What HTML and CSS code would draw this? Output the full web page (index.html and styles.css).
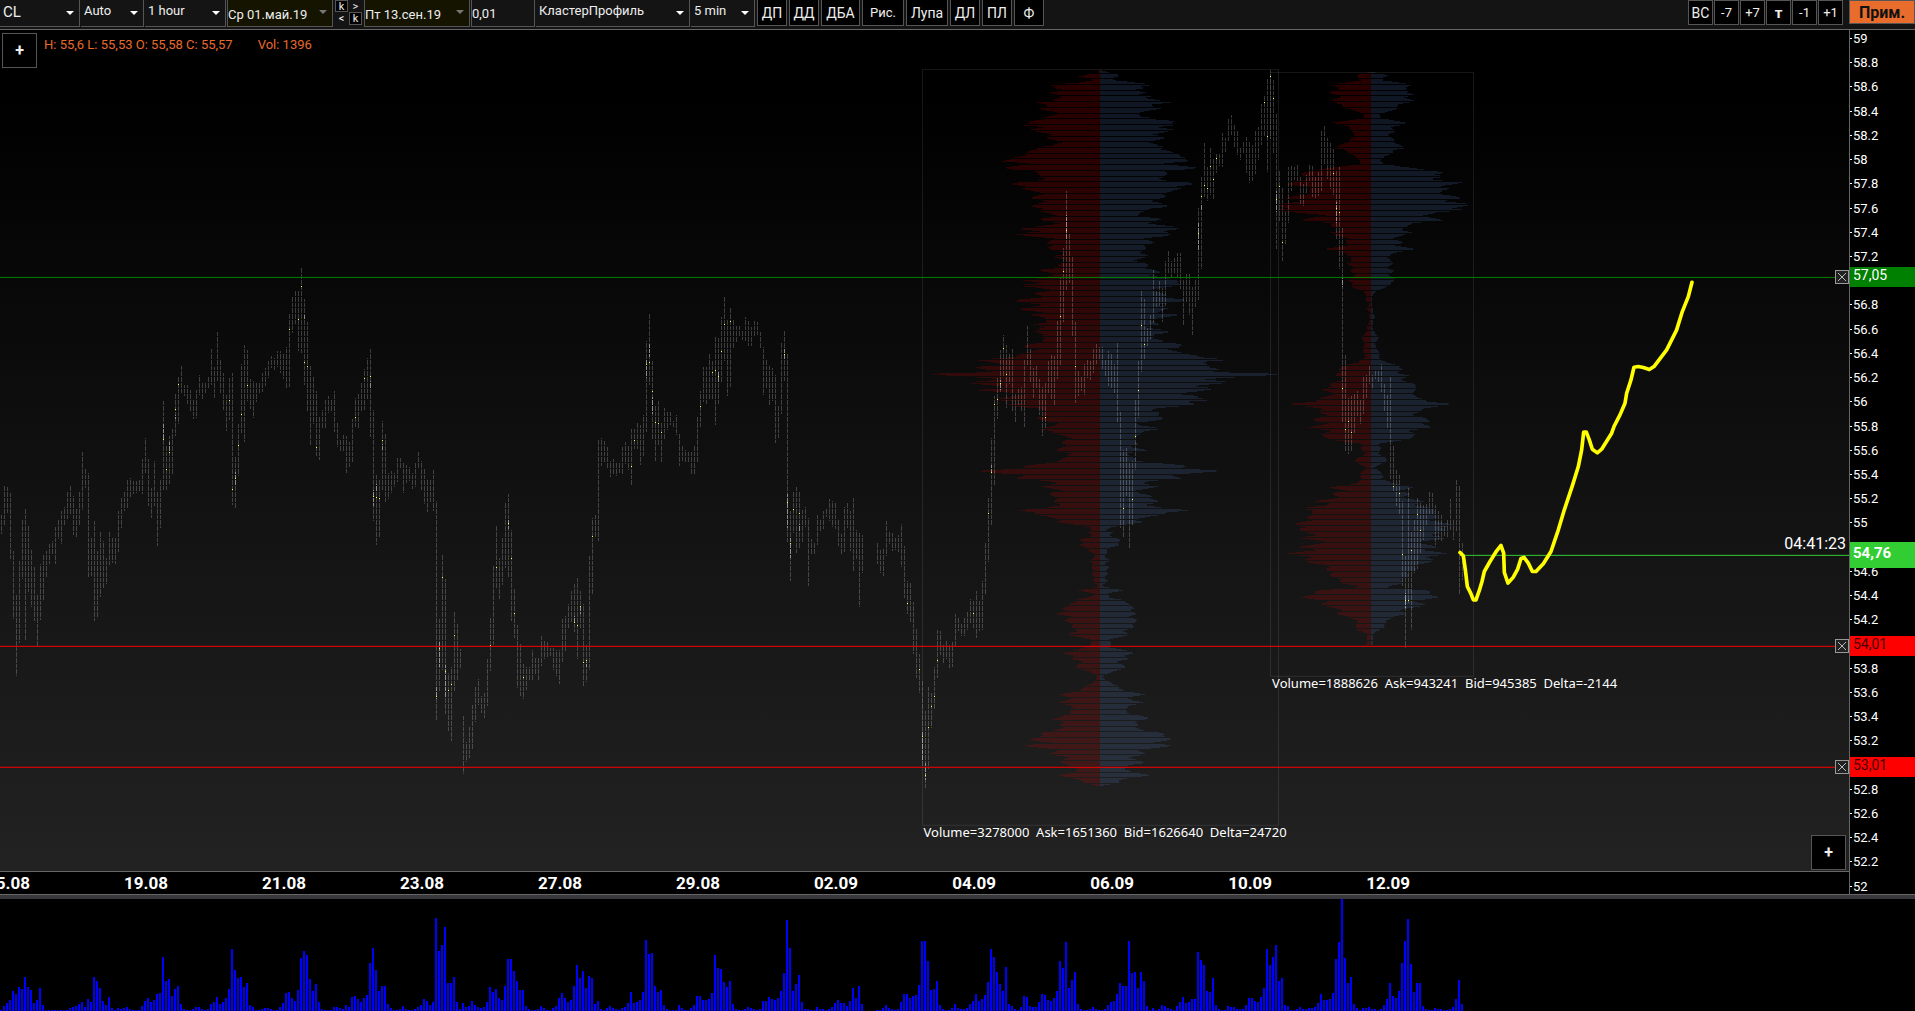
FILE: index.html
```html
<!DOCTYPE html>
<html lang="ru">
<head>
  <meta charset="UTF-8" />
  <meta name="viewport" content="width=device-width, initial-scale=1" />
  <title>CL - КластерПрофиль</title>
  <link rel="stylesheet" href="styles.css">
</head>
<body>
  <header class="toolbar">
    <label class="drop w-symbol"><select aria-label="Инструмент"><option>CL</option></select></label>
    <label class="drop w-auto"><select aria-label="Масштаб"><option>Auto</option></select></label>
    <label class="drop w-period"><select aria-label="Период"><option>1 hour</option></select></label>
    <label class="drop date"><select aria-label="Дата с"><option>Ср 01.май.19</option></select></label>
    <div class="steps">
      <button class="key">k</button><button>&gt;</button>
      <button>&lt;</button><button class="key">k</button>
    </div>
    <label class="drop date"><select aria-label="Дата по"><option>Пт 13.сен.19</option></select></label>
    <input class="step" type="text" value="0,01" aria-label="Шаг цены">
    <label class="drop w-mode"><select aria-label="Режим"><option>КластерПрофиль</option></select></label>
    <label class="drop w-min"><select aria-label="Интервал"><option>5 min</option></select></label>
    <div class="tools">
      <button>ДП</button>
      <button>ДД</button>
      <button class="mid">ДБА</button>
      <button class="wide small">Рис.</button>
      <button class="wide">Лупа</button>
      <button>ДЛ</button>
      <button>ПЛ</button>
      <button>Ф</button>
    </div>
    <div class="shifts">
      <button class="big">ВС</button>
      <button>-7</button>
      <button>+7</button>
      <button class="bold">т</button>
      <button>-1</button>
      <button>+1</button>
    </div>
    <button class="apply">Прим.</button>
  </header>

  <main class="chart">
    <section class="plot">
      <svg id="plot" viewBox="0 0 1849 841" preserveAspectRatio="none" aria-hidden="true">
        <g class="profiles" id="profiles"></g>
        <rect class="range" x="922.5" y="39.5" width="356" height="756" />
        <rect class="range" x="1270.5" y="42.5" width="203" height="604" />
        <g id="candles"></g>
        <path class="level up" d="M0 247.5H1849" />
        <path class="level last" d="M1460 525.5H1849" />
        <path class="level down" d="M0 616.5H1849M0 737.5H1849" />
        <path class="forecast" transform="translate(1450 240) scale(0.3333)" d="M30 848L40 858L46 900L52 950L62 970L70 990H78L88 962L96 935L103 905L120 875L140 843L153 827L161 850L163 908L174 940L190 922L203 898L213 866L222 863L235 880L247 905H258L280 882L303 845L325 780L343 720L368 645L385 590L395 540L401 487H409L418 510L427 538L442 549L455 538L485 490L492 470L510 435L525 400L530 370L543 330L552 292L565 290L580 293L598 299L612 290L650 240L665 210L680 180L697 125L715 80L726 37" />
      </svg>
      <p class="ohlc"><span>H: 55,6 L: 55,53 O: 55,58 C: 55,57</span><span>Vol: 1396</span></p>
      <button class="plus plus-top">+</button>
      <button class="plus plus-bottom">+</button>
      <button class="close" style="top: 29.4%" aria-label="Удалить уровень 57,05"><svg viewBox="0 0 12 12"><path d="M2 2L10 10M10 2L2 10" /></svg></button>
      <button class="close" style="top: 73.3%" aria-label="Удалить уровень 54,01"><svg viewBox="0 0 12 12"><path d="M2 2L10 10M10 2L2 10" /></svg></button>
      <button class="close" style="top: 87.7%" aria-label="Удалить уровень 53,01"><svg viewBox="0 0 12 12"><path d="M2 2L10 10M10 2L2 10" /></svg></button>
      <span class="timer" style="top: 61%">04:41:23</span>
      <span class="note" style="left: 49.95%; top: 95.4%">Volume=3278000&nbsp; Ask=1651360&nbsp; Bid=1626640&nbsp; Delta=24720</span>
      <span class="note" style="left: 68.8%; top: 77.7%">Volume=1888626&nbsp; Ask=943241&nbsp; Bid=945385&nbsp; Delta=-2144</span>
    </section>

    <aside class="prices">
      <ol id="prices"></ol>
      <span class="tag up" style="top: 28.6%">57,05</span>
      <span class="tag last" style="top: 60.7%">54,76</span>
      <span class="tag down" style="top: 71.2%">54,01</span>
      <span class="tag down" style="top: 85.2%">53,01</span>
    </aside>

    <ol class="days">
      <li>15.08</li>
      <li>19.08</li>
      <li>21.08</li>
      <li>23.08</li>
      <li>27.08</li>
      <li>29.08</li>
      <li>02.09</li>
      <li>04.09</li>
      <li>06.09</li>
      <li>10.09</li>
      <li>12.09</li>
    </ol>
  </main>

  <section class="volume">
    <svg id="volume" viewBox="0 0 1915 112" preserveAspectRatio="none" aria-hidden="true"></svg>
  </section>

  <script src="chart.js"></script>
</body>
</html>
```
FILE: styles.css
```css
* { box-sizing: border-box; margin: 0; padding: 0; }

body {
  display: flex;
  flex-direction: column;
  height: 100vh;
  overflow: hidden;
  background: #000;
  color: #fff;
  font-family: Roboto, "Noto Sans", sans-serif;
  font-size: 13px;
}

button, select, input {
  font-family: inherit;
  font-size: inherit;
  color: #eee;
  background: #000;
  border: 1px solid #555;
  border-radius: 0;
}

ol { list-style: none; }

/* toolbar */
.toolbar {
  display: flex;
  align-items: flex-start;
  gap: 1px;
  flex: none;
  height: 30px;
  background: #141414;
  border-bottom: 1px solid #666;
}

.drop {
  position: relative;
  flex: none;
  height: 27px;
}

.drop select {
  appearance: none;
  display: block;
  width: 100%;
  height: 27px;
  padding: 0 3px 6px;
  background: #141414;
  border-width: 0 1px 1px 0;
}

.drop::after {
  content: "";
  position: absolute;
  right: 6px;
  top: 11px;
  border: 4px solid transparent;
  border-top-color: #fff;
  border-bottom: 0;
  pointer-events: none;
}

.w-symbol { width: 80px; }
.w-auto { width: 63px; }
.w-period { width: 81px; }
.w-mode { width: 154px; }
.w-min { width: 64px; }

.w-symbol select { font-size: 15px; padding-bottom: 3px; }

.date { width: 106px; }
.date select {
  padding: 2px 0 0;
  background: #141400;
  border-left-width: 1px;
}
.date::after { border-top-color: #777; top: 10px; }

.steps {
  display: grid;
  grid-template-columns: 13px 13px;
  grid-template-rows: 12px 13px;
  gap: 0 1px;
  width: 29px;
  padding-left: 1px;
}
.steps button {
  background: none;
  border-color: transparent;
  font-size: 11px;
  line-height: 9px;
}
.steps .key { background: #000; border-color: #555; }

.step {
  width: 64px;
  height: 27px;
  background: #141414;
  border-width: 0 1px 1px;
}

.tools, .shifts { display: flex; }
.tools { gap: 2px; margin-left: 1px; }
.tools button {
  width: 30px;
  height: 26px;
  border-top: 0;
  font-size: 14px;
}
.tools .mid { width: 39px; }
.tools .wide { width: 42px; }
.tools .small { font-size: 13px; }

.shifts { gap: 1px; margin: 0 5px 0 auto; }
.shifts button { width: 25px; height: 25px; font-size: 13px; }
.shifts .big { font-size: 14px; }
.shifts .bold { font-weight: bold; font-size: 15px; }

.apply {
  width: 66px;
  height: 24px;
  background: #e86c2c;
  color: #111;
  font-size: 16px;
  font-weight: bold;
}

/* chart */
.chart {
  flex: 1;
  min-height: 0;
  display: grid;
  grid-template-columns: 1fr 66px;
  grid-template-rows: 1fr 24px;
}

.plot {
  position: relative;
  overflow: hidden;
  background: linear-gradient(#000, #000 8%, #222);
}
.plot > svg {
  display: block;
  position: absolute;
  width: 100%;
  height: 100%;
  shape-rendering: crispEdges;
}

.bid { fill: rgba(255, 0, 0, .16); }
.ask { fill: rgba(100, 155, 240, .15); }
.range { fill: none; stroke: rgba(255, 255, 255, .09); }
.candle { fill: rgba(255, 255, 255, .21); }
.strong { fill: rgba(255, 255, 255, .4); }
.poc { fill: #ffff40; }
.level { stroke-width: 1; }
.level.up { stroke: #008000; }
.level.last { stroke: #32cd32; }
.level.down { stroke: #f00; }
.forecast {
  fill: none;
  stroke: #ff0;
  stroke-width: 11;
  stroke-linecap: round;
  stroke-linejoin: round;
  shape-rendering: auto;
}

.ohlc {
  position: absolute;
  left: 44px;
  top: 7px;
  display: flex;
  gap: 25px;
  color: #e8692c;
}

.plus {
  position: absolute;
  width: 35px;
  height: 35px;
  font-size: 16px;
  font-weight: bold;
}
.plus-top { left: 2px; top: 3px; }
.plus-bottom { right: 3px; bottom: 1px; }

.close {
  position: absolute;
  right: 0;
  width: 14px;
  height: 14px;
  background: #222;
  border-color: #999;
  transform: translateY(-50%);
}
.close svg { display: block; width: 12px; height: 12px; }
.close path { stroke: #bbb; }

.timer, .note {
  position: absolute;
  white-space: nowrap;
  transform: translateY(-50%);
}
.timer { right: 3px; font-size: 16px; }
.note { font-family: "Noto Sans", sans-serif; }

/* scales */
.prices {
  position: relative;
  grid-row: span 2;
  border-left: 1px solid #666;
}
.prices ol {
  display: flex;
  flex-direction: column;
  justify-content: space-between;
  height: 100%;
}
.prices li {
  display: flex;
  align-items: center;
  gap: 1px;
  height: 17px;
  line-height: 17px;
}
.prices li::before {
  content: "";
  width: 2px;
  height: 1px;
  background: #fff;
}

.tag {
  position: absolute;
  left: 0;
  right: 0;
  padding-left: 3px;
  font-size: 14px;
  line-height: 16px;
  padding-bottom: 4px;
  transform: translateY(-50%);
}
.tag.up { background: #008000; }
.tag.last {
  background: #32cd32;
  font-size: 15px;
  font-weight: bold;
  line-height: 22px;
}
.tag.down { background: #f00; color: #400; }

.days {
  display: flex;
  overflow: hidden;
  border-top: 1px solid #666;
  font-size: 17px;
  font-weight: bold;
  line-height: 22px;
}
.days li {
  flex: none;
  width: 7.465%;
  text-align: center;
}
.days li:first-child { margin-left: -3.3%; }

/* volume */
.volume {
  flex: none;
  height: 11.5vh;
  border-top: 4px solid #38383c;
  box-shadow: inset 0 1px #000, 0 -1px #666;
}
.volume svg {
  display: block;
  width: 100%;
  height: 100%;
  fill: #00f;
  shape-rendering: crispEdges;
}
```
FILE: chart.js
```js
// hourly bars: top-bottom, @ price of max volume, ~ heavy volume zone
const hours = [
  { first: 0, top: 220, scale: 2.904, bars: `
    768-825 685-800 688-765 705-897 873-1071 998-1237 903-1141 780-955 752-1135 800-993
    870-1036 920-1077 998-1151 911-1074 885-1016 873-950 853-911 844-885 803-911 783-838
    757-853 745-798 699-783 682-771 713-829 751-835 702-800 583-754 635-690 647-949
    832-946 786-1077 873-1065 818-1007 844-981 893-969 818-914 832-908 835-911 757-876
    716-806 702-757 667-748 661-719 670-710 670-705 664-699 606-708 545-647 606-742
    690-777 612-742 699-861 667-806 438-696@550~505-550 565-696@636 540-679@588~558-590 519-652 415-540@463~480-490 368-505@392
    336-418 391-423 391-446 406-469 435-490 406-487 362-420 382-435 385-418 365-400
    287-391 339-429 237-380 318-418 356-464 420-525 371-493@436 356-740@695 597-748@663~645-682 504-655@567
    330-530@477 275-557 290-438@393 374-461 379-487 382-440 382-417 356-411 342-394 321-371
    307-342 313-350 292-339 292-356 298-374 281-403 185-397@230 136-240 115-214 118-292@201
    51-301@107 141-391@326~190-200 208-467@338 333-569 368-504 409-598@573 484-609 464-519 435-516 423-472
    432-467 409-528 501-571 548-586 536-583 539-647 557-629 490-620 429-513@486 415-516
    385-467 347-464@373 313-437 287-542@367~380-400 464-786@715~697-742 650-856@718~680-700 664-835@721 496-697@553~562-580 530-731 647-722
    641-705 647-688 603-673 603-635 615-705 623-676 629-670 647-693 618-687 588-635
    612-696 632-737 664-760 667-731 638-757 728-1368@1296~1266-1305 1071-1283@1157~1138-1211 885-1220@950 954-1350@1223~1205-1300 1228-1397@1278
    1211-1426@1261 1051-1281@1119 1086-1251 1160-1217 1353-1522 1428-1486 1384-1475 1321-1451 1265-1370 1246-1321
    1295-1344 1286-1358 1188-1324 1066-1222@1148 914-1147 800-984@921 893-1013 836-972 731-923 710-949@795~785-810
    812-1077@895 984-1127@1055 1089-1272 1144-1295 1202-1304@1241 1211-1278 1211-1249 1163-1249 1185-1234 1185-1251
    1121-1208 1132-1188 1138-1185 1156-1179 1156-1220 1161-1237 1161-1260 1071-1196 1062-1167 1028-1098
    990-1080 969-1109@1081~1063-1085 952-1188@1091 990-1100@1035~1030-1057 1028-1266@1197 1147-1254@1192~1195-1210 888-1220 777-998@831 768-835 548-844
    545-627 554-618 571-632 612-658 606-650 620-655 618-647 571-652 557-621 568-638
    516-685@628 519-577@553 501-577 507-623 478-600 263-528@332~320-372 185-391@326~273-312 321-551@410~427-475 449-612@500 438-569@503
    499-618@529 458-548 469-522 469-508 496-514 478-536 530-627 565-612 580-618 588-615
    588-652 568-652 481-615 409-514@454 339-440 339-446 298-432 321-435@355 249-507@349 255-446@367~355-385
    196-385@294 136-321@216 202-424 168-397@207 203-284 220-266 220-249 234-260 196-263 205-278
    223-278 205-252 208-246 237-287 281-420 319-403 333-452 342-438 362-560 449-545
    269-475 231-379@303~285-317 301-847@733~710-807 757-960@852~836-893 702-823@753 687-879 702-864@766~795-815 754-850 745-803 777-975
    838-885 850-882 768-856 783-818 757-809 748-774 722-786 728-803 734-809 780-861
    824-882 745-876 734-806 757-873 716-931 812-896 821-1036 829-937 0-0 0-0
    0-0 0-0 847-911 870-937 864-946 786-888 818-853 821-873 832-870 829-876
    795-920 861-1010 960-1056@1026 963-1080 1022-1173 1100-1243 1173-1286@1218 1251-1498@1412~1400-1485 1339-1562@1525~1490-1540 1269-1507@1386
    1286-1388@1325 1211-1333@1296 1103-1243@1192` },
  { first: 313, top: 30, scale: 3, bars: `
    1713-1785 1755-1810 1743-1798 1755-1824 1746-1822 1661-1760 1670-1712
    1688-1728 1670-1728 1655-1710 1616-1688 1620-1707@1660 1592-1733 1619-1713 1562-1710 1448-1602 1310-1506@1360
    1133-1398@1237~1215-1240 1008-1275@1033 954-1077@1019 870-996@970~960-990 825-948@865 855-1044@943 882-972 864-1053 1002-1085 984-1035
    981-1053 897-1101 798-915 864-966 924-1014 915-987 957-1065 981-1128 969-1104@1072 903-1002
    885-1020 888-1035 783-957 654-915@769 564-786@634 393-690@511~465-540 522-669 591-831 786-1029@919 933-1008
    951-993 912-1005 900-954 903-960 864-939 852-912 861-897 861-928 900-948 873-978
    882-984 912-1002 846-1089 1056-1404 1170-1434@1345 1164-1308 1209-1464 1203-1398@1318 1020-1230@1129 903-1074@991
    690-936@796 717-897@853 804-858 765-837 630-789 690-744 663-738 684-786 603-738 570-642
    603-654 594-642 579-654 579-687 660-798 639-726 642-765 681-825 657-744 444-720@520~490-570
    351-627@409~433-453 249-411@376 321-423@385 264-405@319 294-417@358 279-339@295 282-318 219-321 234-276 177-246
    165-225 192-261 213-285 261-300 243-282 228-339 243-369 255-363 213-342 201-300
    132-255 105-231@127 57-336@230 30-237@49 60-279@115 159-567@418~393-456 330-486@379 381-603@547 456-555 321-489
    318-393 321-360 315-366 348-432 372-438 345-399 312-366 318-411 348-414 336-408
    213-393 198-312 234-357 249-387 267-405@340 330-540@445~426-490 321-627@457 504-1089@985~650-680 885-1173@1108 1014-1182@1084
    1008-1176@1117 999-1119 993-1071 1017-1092 951-1062 945-1014 915-972 945-984 930-957 933-966
    912-996 972-1056 1005-1107 948-1257 1158-1293@1279 1230-1338 1241-1362@1300 1323-1578@1483 1488-1764@1621~1600-1645 1284-1630@1621
    1413-1710@1471 1380-1540 1314-1527@1363 1326-1480@1411 1335-1440 1332-1395 1293-1365 1299-1365 1335-1455 1353-1440
    1365-1443 1395-1428 1377-1434 1317-1410 1377-1440 1260-1413 1275-1605 1446-1560` },
];

// volume profiles: y, bid, ask
const profiles = [
  { x: 1100, rows: `
    30,5,5 36,5,22 42,34,50 48,54,46 54,20,20 60,20,40 66,60,100 72,122,132 78,105,95 84,112,110 90,95,90 96,120,108
    102,100,92 108,105,134 114,110,122 120,110,140 125,155,175 132,150,145 138,130,130 144,140,140 150,135,125 156,118,110
    162,105,92 168,120,95 174,150,140 181,175,186 187,162,165 195,190,183 201,155,160 207,165,172 213,150,160 222,135,148
    232,125,150 240,110,140 246,100,130 255,110,135 262,168,165 270,175,170 278,168,168 285,190,205 289,237,234 295,200,200
    303,232,205 308,190,170 314,200,190 322,220,228 330,205,195 338,150,165 345,140,150 352,150,160 360,155,165 366,190,205
    373,220,230 381,200,205 390,160,170 400,150,170 408,155,155 415,160,140 424,145,145 432,150,150 440,168,165 450,150,110
    458,120,90 468,115,110 475,140,145 482,130,130 490,110,135 498,150,170 508,205,196 513,160,170 520,200,165 528,165,155
    536,115,110 545,120,125 554,135,125 562,125,110 570,105,100 580,90,115 588,115,112 596,95,95 604,85,100 612,95,110
    622,110,122 628,150,130 636,120,140 645,130,140 653,140,160 660,185,185 667,160,220 675,200,185 681,150,150 690,125,135
    698,155,145 706,140,160 717,195,205 725,190,180 732,160,160 740,170,165 748,190,150 755,160,160 763,165,190 770,130,150
    778,150,140 786,125,130 794,165,140 802,155,130 810,150,155 818,150,165 826,155,140 834,125,120 842,150,165 850,165,195
    858,180,185 864,180,200 872,170,185 880,175,195 888,230,270 898,292,306 904,260,240 912,270,300 920,290,250 928,270,290
    935,310,325 940,418,437 948,320,350 957,270,290 966,310,305 974,280,250 982,260,290 990,280,240 998,210,210 1006,205,240
    1012,225,220 1019,268,287 1026,190,230 1034,225,215 1042,180,160 1050,140,130 1060,130,140 1069,170,165 1078,135,140
    1085,120,105 1095,110,100 1101,125,130 1108,145,145 1116,120,105 1125,85,85 1134,80,95 1144,90,80 1152,85,95 1160,95,80
    1170,100,110 1180,80,70 1190,75,75 1200,110,100 1208,120,140 1216,180,205 1224,215,230 1231,290,288 1238,240,220
    1246,210,200 1254,195,190 1262,125,120 1270,120,120 1278,135,135 1288,105,105 1298,115,90 1308,115,130 1316,110,135
    1324,105,135 1332,105,125 1342,130,150 1350,195,210 1360,170,170 1368,120,115 1376,105,90 1384,110,110 1392,60,60
    1400,30,35 1408,20,12 1416,28,30 1424,22,25 1432,30,35 1438,52,50 1446,40,48 1454,50,46 1462,30,22 1470,32,18 1480,12,15
    1490,15,12 1500,25,25 1508,18,12 1520,20,22 1530,15,15 1540,20,20 1550,12,10 1560,18,20 1570,10,10 1576,4,4 1584,25,35
    1590,50,54 1598,18,20 1606,18,24 1612,30,20 1620,65,70 1630,72,68 1638,75,75 1645,106,92 1652,80,75 1661,105,86
    1670,75,80 1680,80,85 1690,75,88 1700,65,78 1710,60,65 1722,80,70 1730,50,50 1738,25,22 1746,20,25 1754,25,28 1760,40,20
    1768,50,55 1779,103,93 1786,60,55 1796,70,70 1804,45,45 1812,50,50 1824,65,70 1832,25,32 1840,15,18 1850,6,4 1860,12,15
    1868,22,32 1876,35,42 1884,40,45 1892,60,72 1902,92,105 1910,80,75 1920,80,80 1928,100,105 1936,80,80 1946,55,55
    1954,80,70 1962,80,85 1972,95,115 1978,130,118 1986,85,85 1994,95,90 2002,100,100 2010,110,105 2018,140,150 2024,160,180
    2030,150,160 2038,165,165 2046,140,150 2056,180,165 2064,130,125 2072,110,100 2082,118,105 2090,85,80 2100,90,90
    2108,92,110 2116,80,70 2126,50,55 2134,65,85 2144,98,120 2152,75,75 2160,50,50 2168,35,42 2176,5,5` },
  { x: 1371, rows: `
    37,10,10 44,40,50 52,30,25 60,25,30 66,70,80 72,100,100 80,75,80 88,90,100 96,100,85 104,80,105 112,85,90 122,95,103
    130,85,80 138,70,65 146,50,60 154,35,45 162,18,22 170,15,20 178,50,55 186,88,80 194,70,75 202,55,50 210,45,58 220,45,50
    230,40,45 240,55,60 248,65,60 256,75,70 263,95,92 270,60,55 280,50,48 290,40,35 300,25,20 310,30,35 318,70,70
    326,120,120 334,180,200 342,160,150 350,155,175 358,180,165 366,180,210 374,210,195 382,150,195 390,140,165 398,160,180
    406,180,195 414,200,210 422,190,200 430,210,230 440,220,220 448,247,239 456,175,150 464,120,140 472,145,150 480,160,165
    488,110,120 496,95,85 506,70,75 515,100,105 522,85,78 530,70,65 538,60,60 546,55,75 554,60,65 565,108,102 574,80,75
    582,60,50 590,45,35 600,55,55 610,55,50 620,45,40 630,50,55 640,40,45 652,50,55 660,55,55 668,50,55 676,45,40 684,40,30
    692,20,15 700,12,6 710,14,4 720,12,3 730,4,2 745,12,5 755,4,4 770,6,10 780,4,5 790,6,4 800,12,4 810,6,5 820,15,12
    830,20,18 840,20,15 850,15,10 860,18,12 870,20,18 880,15,20 890,15,22 900,25,25 906,30,40 914,75,75 922,70,65 930,80,85
    938,85,65 946,80,90 954,70,85 962,80,80 970,95,100 978,110,125 986,118,105 994,100,100 1002,100,115 1010,110,105
    1018,130,135 1030,193,190 1038,155,160 1046,130,140 1054,125,110 1062,110,100 1070,130,135 1078,135,130 1086,120,145
    1094,125,140 1102,145,135 1110,110,105 1118,115,105 1126,110,100 1134,120,110 1142,70,60 1150,20,15 1160,25,25
    1170,20,20 1180,15,20 1190,25,30 1200,45,45 1210,30,25 1220,10,8 1228,15,15 1238,25,25 1248,28,35 1256,20,20 1264,30,50
    1274,60,75 1282,100,100 1290,70,80 1300,90,90 1310,80,80 1322,130,125 1330,100,110 1342,160,140 1350,140,150
    1357,165,180 1364,140,150 1374,155,155 1386,170,170 1396,180,200 1404,185,190 1414,155,160 1422,150,165 1432,170,180
    1442,120,130 1450,130,130 1460,170,155 1470,150,145 1480,200,180 1488,165,155 1500,155,145 1510,145,135 1520,95,100
    1530,110,110 1540,100,90 1550,90,85 1560,80,80 1570,65,70 1576,30,50 1582,50,45 1590,120,130 1600,150,155 1610,165,160
    1620,120,115 1630,120,130 1640,100,110 1650,75,75 1662,80,80 1670,60,60 1680,30,35 1690,38,38 1700,35,30 1710,35,20
    1720,8,5 1735,12,5 1745,8,5 1752,12,5` },
];

const volume = [
  1, 5, 8, 11, 20, 17, 24, 22, 34, 24, 21, 8, 11, 23, 6, 1, 1, 1, 1, 1, 1, 1, 1, 3, 4, 5, 7, 9, 4, 12, 9,
  34, 30, 23, 10, 6, 14, 3, 1, 3, 2, 3, 4, 2, 1, 1, 1, 5, 10, 13, 9, 11, 17, 18, 54, 30, 32, 15, 22, 25, 7,
  2, 1, 1, 2, 4, 4, 2, 1, 2, 7, 9, 14, 7, 9, 13, 22, 62, 41, 33, 34, 24, 28, 6, 4, 1, 1, 2, 3, 3, 2, 1, 1,
  4, 8, 18, 19, 13, 10, 21, 53, 60, 56, 32, 20, 27, 9, 2, 1, 1, 1, 4, 4, 3, 2, 6, 4, 14, 15, 12, 9,
  13, 16, 48, 63, 41, 20, 25, 25, 7, 3, 1, 1, 2, 5, 2, 1, 1, 2, 4, 6, 12, 10, 6, 9, 93, 60, 66, 84, 28, 28, 34, 9,
  2, 8, 4, 5, 10, 6, 4, 3, 4, 9, 24, 19, 22, 13, 11, 25, 52, 52, 40, 30, 21, 21, 5, 2, 1, 1, 2, 5, 3, 1, 1, 3,
  5, 13, 18, 13, 9, 11, 25, 46, 33, 40, 23, 35, 33, 7, 10, 2, 1, 3, 5, 3, 2, 1, 3, 4, 8, 19, 8, 9, 11, 19,
  71, 57, 58, 25, 19, 21, 6, 2, 1, 1, 1, 6, 3, 1, 1, 3, 6, 15, 15, 11, 11, 12, 18, 56, 43, 42, 29, 24, 30, 7, 2, 1,
  1, 2, 4, 3, 2, 1, 2, 10, 10, 14, 12, 11, 13, 20, 38, 91, 63, 20, 27, 36, 9, 2, 2, 1, 1, 4, 2, 2, 1, 2, 4, 8, 11, 8, 8, 5, 10,
  23, 13, 25, 7, 0, 0, 0, 0, 1, 1, 3, 6, 3, 2, 1, 2, 9, 17, 17, 13, 15, 16, 26, 70, 70, 50, 21, 22, 30, 6, 2,
  1, 1, 3, 7, 3, 2, 2, 3, 7, 10, 17, 10, 12, 16, 29, 62, 54, 39, 27, 20, 44, 7, 5, 2, 1, 4, 15, 14, 5, 4, 4,
  9, 17, 16, 11, 10, 13, 20, 50, 43, 69, 23, 31, 39, 7, 2, 1, 1, 2, 4, 2, 1, 1, 2, 6, 9, 10, 17, 28, 25, 25,
  70, 38, 39, 23, 39, 30, 5, 1, 3, 1, 2, 6, 5, 3, 2, 1, 5, 9, 14, 8, 9, 12, 12, 59, 51, 46, 20, 19, 33, 6, 2,
  1, 1, 5, 4, 4, 2, 2, 2, 6, 13, 13, 10, 9, 14, 23, 62, 46, 54, 66, 30, 33, 6, 5, 1, 1, 2, 4, 2, 2, 3, 3, 4,
  8, 17, 11, 11, 12, 18, 52, 69, 112, 53, 28, 34, 7, 3, 1, 3, 3, 4, 2, 2, 1, 2, 6, 12, 28, 15, 13, 20, 48,
  70, 92, 47, 19, 28, 28, 5, 2, 1, 1, 3, 2, 2, 1, 1, 2, 4, 12, 31, 7,
];

const svgPath = (parent, cls, d) => {
  const path = document.createElementNS('http://www.w3.org/2000/svg', 'path');
  path.setAttribute('class', cls);
  path.setAttribute('d', d);
  document.getElementById(parent).appendChild(path);
};

// one price tick is 1.21px, so every few ticks a pixel row stays empty
const isGap = y => (y - 42 + 573) % 5.73 < 1;

const column = (x, from, to) => {
  let d = '';
  let start = null;
  for (let y = Math.round(from); y <= Math.round(to); y++) {
    const open = y < Math.round(to) && !isGap(y);
    if (open && start === null) start = y;
    if (!open && start !== null) {
      d += `M${x} ${start}h1V${y}h-1z`;
      start = null;
    }
  }
  return d;
};

let candles = '', strong = '', poc = '';
hours.forEach(({ first, top, scale, bars }) => {
  const toY = v => v / scale + top;
  bars.trim().split(/\s+/).forEach((bar, n) => {
    const [, high, low, max, from, to] = bar.match(/^(\d+)-(\d+)(?:@(\d+))?(?:~(\d+)-(\d+))?$/);
    if (low === '0') return;
    const x = (first + n) * 3 + 1;
    candles += column(x, toY(+high), toY(+low));
    if (from) strong += column(x, toY(+from), toY(+to));
    if (max) poc += `M${x} ${Math.floor(toY(+max))}h1v1h-1z`;
  });
});

let bid = '', ask = '';
profiles.forEach(({ x, rows }) => {
  const points = rows.trim().split(/\s+/).map(r => r.split(',').map(Number));
  let p = 0;
  const end = points[points.length - 1][0] / 3 + 30;
  for (let y = Math.round(points[0][0] / 3 + 30); y <= end; y++) {
    if (isGap(y)) continue;
    const v = (y - 30) * 3;
    while (p < points.length - 2 && points[p + 1][0] < v) p++;
    const [y0, b0, a0] = points[p];
    const [y1, b1, a1] = points[p + 1];
    const t = Math.min(1, Math.max(0, (v - y0) / (y1 - y0)));
    const noise = 0.86 + 0.2 * Math.abs(Math.sin(y * 12.9898));
    const b = Math.round((b0 + (b1 - b0) * t) * noise / 2.45);
    const a = Math.round((a0 + (a1 - a0) * t) * noise / 2.45);
    bid += `M${x - b} ${y}h${b}v1h${-b}z`;
    ask += `M${x} ${y}h${a}v1h${-a}z`;
  }
});

svgPath('profiles', 'bid', bid);
svgPath('profiles', 'ask', ask);
svgPath('candles', 'candle', candles);
svgPath('candles', 'strong', strong);
svgPath('candles', 'poc', poc);
svgPath('volume', 'bars', volume.map((v, i) => `M${i * 3} 112v${-v}h2v${v}z`).join(''));

// labels covered by a price tag are left empty
const covered = [57, 54.8, 54, 53];
const prices = document.getElementById('prices');
for (let tick = 295; tick >= 260; tick--) {
  const li = document.createElement('li');
  const price = tick / 5;
  if (!covered.includes(price)) li.textContent = price;
  prices.appendChild(li);
}
```
